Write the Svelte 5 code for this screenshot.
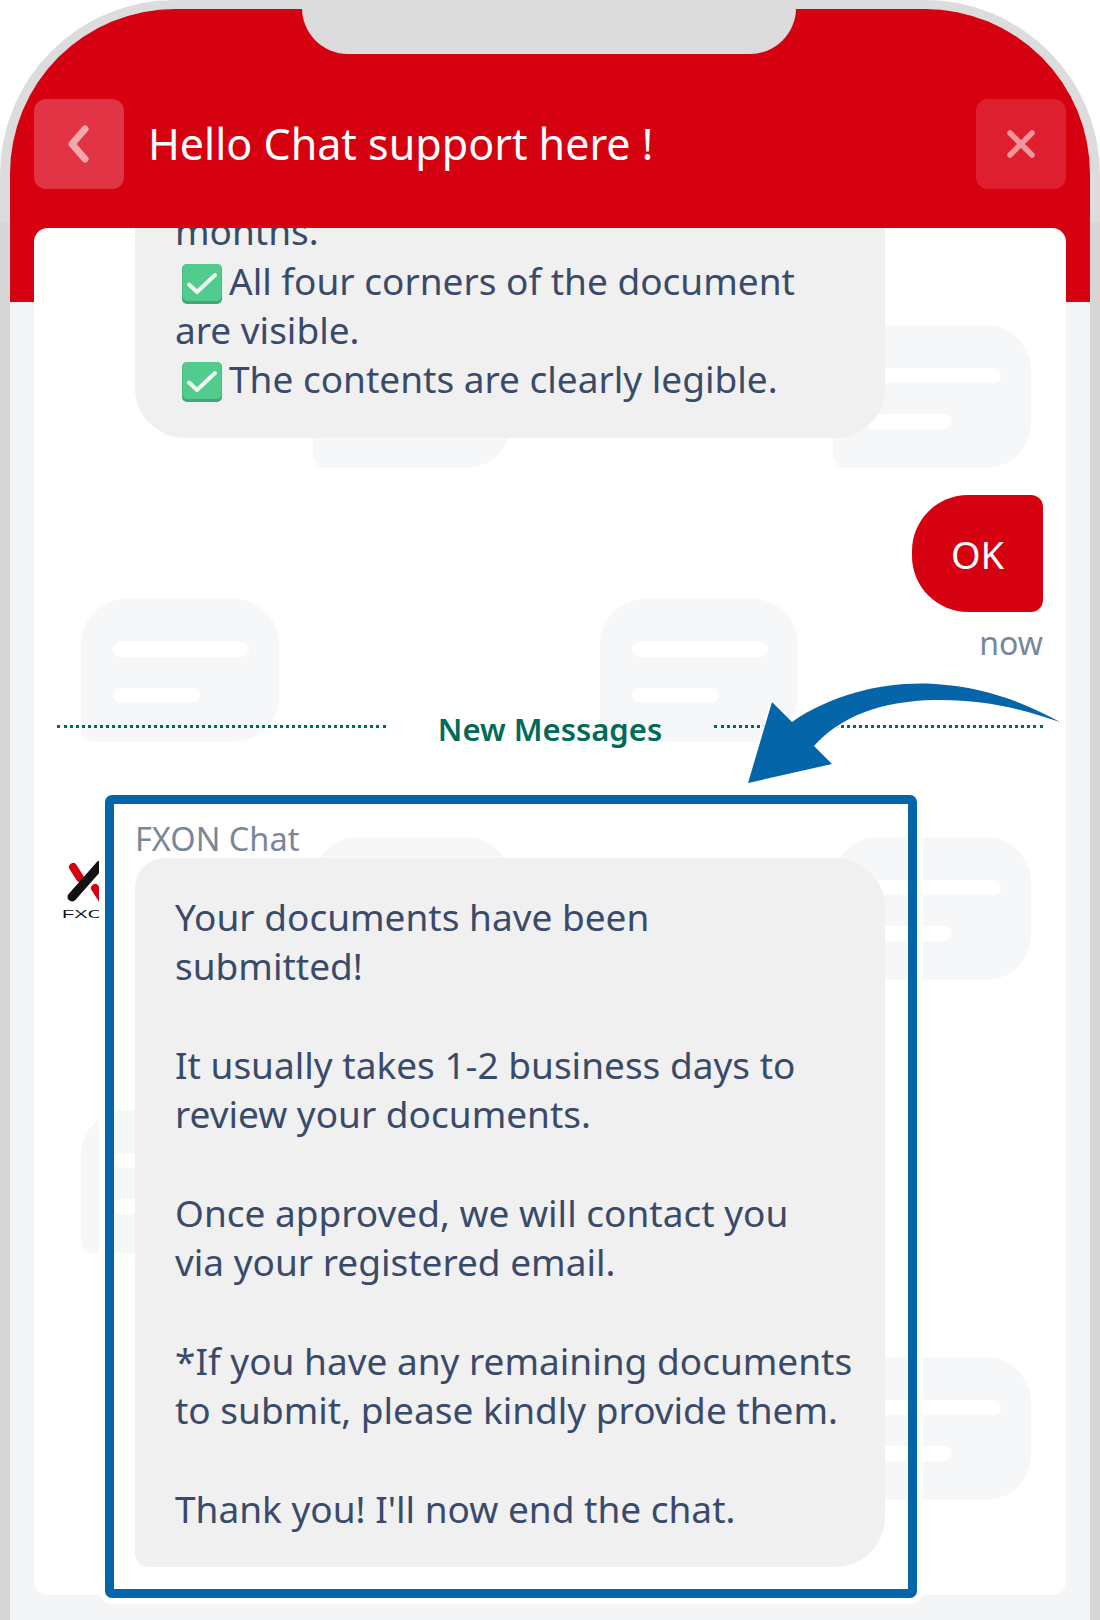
<script>
	// watermark bubbles behind the chat, coordinates are relative to the panel
	const marks = [
		[799, 97], [279, 97],
		[47, 371], [566, 371],
		[799, 609], [279, 609],
		[47, 882], [566, 882],
		[799, 1129], [279, 1129]
	];
</script>

{#snippet tick()}
	<svg class="tick" viewBox="0 0 40 40" aria-hidden="true">
		<rect x="0" y="0" width="40" height="40" rx="5" fill="#3fa878" />
		<rect x="0.5" y="0" width="39" height="37" rx="5" fill="#52cc8c" />
		<path d="M7 20.5l8 7.5L33 11" fill="none" stroke="#f2f7f4" stroke-width="4" stroke-linecap="round" stroke-linejoin="round" />
	</svg>
{/snippet}

<div class="phone">
	<div class="notch"></div>
	<div class="screen">
		<header>
			<button class="btn back" aria-label="Back">
				<svg viewBox="0 0 24 38" width="24" height="38" aria-hidden="true">
					<path d="M18 4L5 19l13 15" fill="none" stroke="#f5a9ae" stroke-width="7" stroke-linecap="round" stroke-linejoin="round" />
				</svg>
			</button>
			<h1>Hello Chat support here !</h1>
			<button class="btn close" aria-label="Close">
				<svg viewBox="0 0 30 30" width="30" height="30" aria-hidden="true">
					<path d="M4 4l22 22M26 4L4 26" fill="none" stroke="#f0959b" stroke-width="5.5" stroke-linecap="round" />
				</svg>
			</button>
		</header>

		<main class="panel">
			<svg class="marks" width="1032" height="1367" aria-hidden="true">
				{#each marks as [x, y]}
					<g transform="translate({x} {y})">
						<path d="M45 0H153A45 45 0 0 1 198 45V98A45 45 0 0 1 153 143H12A12 12 0 0 1 0 131V45A45 45 0 0 1 45 0Z" fill="#f6f7f9" />
						<rect x="32" y="43" width="136" height="15" rx="7.5" fill="#fff" />
						<rect x="32" y="89" width="87" height="15" rx="7.5" fill="#fff" />
					</g>
				{/each}
			</svg>

			<div class="bubble earlier">
				months.<br />
				{@render tick()}All four corners of the document<br />are visible.<br />
				{@render tick()}The contents are clearly legible.
			</div>

			<div class="outgoing">
				<div class="ok">OK</div>
				<div class="time">now</div>
			</div>

			<div class="divider">
				<span class="line"></span>
				<span class="label">New Messages</span>
				<span class="line"></span>
			</div>

			<div class="incoming">
				<svg class="logo" viewBox="0 0 44 62" width="44" height="62" aria-hidden="true">
					<path d="M11 6l7 11" stroke="#d50010" stroke-width="8" stroke-linecap="round" fill="none" />
					<path d="M10 36L40 2" stroke="#111" stroke-width="9" stroke-linecap="round" fill="none" />
					<path d="M33 27l7 11" stroke="#d50010" stroke-width="8" stroke-linecap="round" fill="none" />
					<text x="0" y="57" class="logo-text" textLength="56" lengthAdjust="spacingAndGlyphs">FXON</text>
				</svg>
				<div class="msg">
					<div class="name">FXON Chat</div>
					<div class="bubble last">
						<p>Your documents have been<br />submitted!</p>
						<p>It usually takes 1-2 business days to<br />review your documents.</p>
						<p>Once approved, we will contact you<br />via your registered email.</p>
						<p>*If you have any remaining documents<br />to submit, please kindly provide them.</p>
						<p>Thank you! I'll now end the chat.</p>
					</div>
				</div>
			</div>
		</main>
	</div>

	<div class="highlight"></div>
	<svg class="arrow" viewBox="0 0 340 120" width="340" height="120" aria-hidden="true">
		<path d="M8 108L32 27L52 47C95 17 150 6 195 9C245 12 285 28 320 47C280 33 240 24 195 25C140 26 100 42 74 71L92 89Z" fill="#0466a9" stroke="#fff" stroke-width="3" paint-order="stroke" stroke-linejoin="miter" />
	</svg>
</div>

<style>
	:global(body) {
		margin: 0;
		background: #fff;
	}
	.phone {
		position: relative;
		width: 1100px;
		height: 1620px;
		box-sizing: border-box;
		padding: 9px 10px 0;
		overflow: hidden;
		border-radius: 175px 175px 0 0;
		background: linear-gradient(#dcdcdc 222px, #d6d6d6 222px);
		font-family: "Noto Sans", "Open Sans", sans-serif;
		color: #3a4a69;
	}
	.notch {
		position: absolute;
		left: 302px;
		top: 0;
		width: 494px;
		height: 54px;
		background: #dcdcdc;
		border-radius: 0 0 46px 46px;
	}
	.screen {
		height: 100%;
		border-radius: 165px 165px 0 0;
		background: linear-gradient(#d50010 293px, #f4f5f7 293px);
	}
	header {
		display: flex;
		align-items: center;
		gap: 24px;
		padding: 90px 24px 39px;
	}
	h1 {
		flex: 1;
		margin: 0;
		color: #fff;
		font-size: 43px;
		font-weight: 400;
		line-height: 86px;
	}
	.btn {
		display: flex;
		align-items: center;
		justify-content: center;
		width: 90px;
		height: 90px;
		padding: 0;
		border: 0;
		border-radius: 12px;
	}
	.back {
		background: #e13444;
	}
	.close {
		background: #de1f2f;
	}
	.panel {
		position: relative;
		display: flex;
		flex-direction: column;
		justify-content: flex-end;
		box-sizing: border-box;
		height: 1367px;
		margin: 0 24px;
		padding: 0 23px 28px;
		overflow: hidden;
		border-radius: 14px;
		background: #fff;
		font-size: 37px;
		line-height: 49.35px;
	}
	.marks {
		position: absolute;
		left: 0;
		top: 0;
	}
	.bubble {
		position: relative;
		box-sizing: border-box;
		width: 750px;
		padding: 34px 20px 34px 40px;
		background: #f0f0f1;
		border-radius: 50px;
	}
	.bubble p {
		margin: 0 0 49.35px;
	}
	.bubble p:last-child {
		margin: 0;
	}
	.earlier {
		flex: none;
		margin-left: 78px;
	}
	.last {
		border-radius: 30px 50px 50px 14px;
	}
	.tick {
		width: 40px;
		height: 40px;
		margin: 0 7px 0 7px;
		vertical-align: -9px;
	}
	.outgoing {
		position: relative;
		flex: none;
		display: flex;
		flex-direction: column;
		align-items: flex-end;
		margin-top: 57px;
	}
	.ok {
		display: flex;
		align-items: center;
		justify-content: center;
		box-sizing: border-box;
		width: 131px;
		height: 117px;
		padding-top: 3px;
		background: #d50010;
		color: #fff;
		font-size: 38px;
		border-radius: 56px 12px 12px 56px;
	}
	.time {
		margin-top: 6px;
		color: #7a869a;
		font-size: 32px;
		line-height: 50px;
	}
	.divider {
		position: relative;
		flex: none;
		display: flex;
		align-items: center;
		justify-content: space-between;
		margin-top: 29px;
		height: 60px;
	}
	.line {
		width: 329px;
		border-top: 3px dotted #006b56;
	}
	.label {
		padding-top: 6px;
		color: #006b56;
		font-size: 31px;
		font-weight: 600;
	}
	.incoming {
		position: relative;
		flex: none;
		display: flex;
		margin-top: 63px;
	}
	.logo {
		flex: none;
		margin: 41px 29px 0 5px;
	}
	.logo-text {
		font-family: "Liberation Sans", sans-serif;
		font-size: 11px;
		fill: #111;
	}
	.name {
		color: #7a869a;
		font-size: 32.5px;
		line-height: 38px;
	}
	.highlight {
		position: absolute;
		left: 105px;
		top: 795px;
		width: 812px;
		height: 803px;
		box-sizing: border-box;
		border: 9px solid #0466a9;
		border-radius: 7px;
		box-shadow: 0 0 0 6px #fff;
	}
	.arrow {
		position: absolute;
		left: 740px;
		top: 675px;
	}
</style>
